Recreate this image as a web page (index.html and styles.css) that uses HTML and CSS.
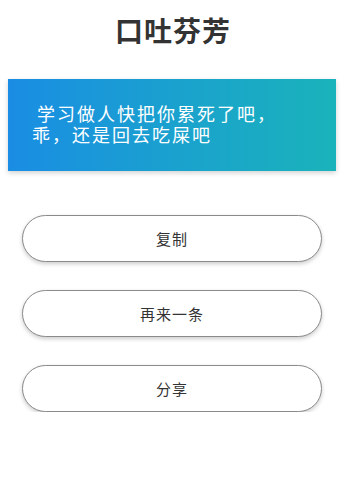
FILE: index.html
```html
<!DOCTYPE html>
<html lang="zh">
<head>
<meta charset="utf-8">
<link rel="stylesheet" href="styles.css">
</head>
<body>
<div class="page">
  <h1 class="title">口吐芬芳</h1>
  <div class="card">
    <p class="quote">学习做人快把你累死了吧，<br>乖，还是回去吃屎吧</p>
  </div>
  <div class="actions">
    <button class="btn">复制</button>
    <button class="btn">再来一条</button>
    <button class="btn">分享</button>
  </div>
</div>
</body>
</html>
```
FILE: styles.css
```css
html, body {
  margin: 0;
  padding: 0;
  background: #ffffff;
}
.page {
  font-family: "Noto Sans CJK SC", "Noto Sans", sans-serif;
  padding-top: 10px;
}
.title {
  margin: 0;
  text-align: center;
  font-size: 28px;
  line-height: 40px;
  letter-spacing: 1px;
  font-weight: 700;
  color: #333333;
}
.card {
  margin: 29px 10px 0 8px;
  height: 92px;
  box-sizing: border-box;
  padding: 26px 0 0 24px;
  background: linear-gradient(90deg, #1a8de4 0%, #1aa3cc 55%, #1ab3bb 100%);
  box-shadow: 0 2px 5px rgba(0, 0, 0, 0.18);
}
.quote {
  margin: 0;
  font-family: "Liberation Sans", "Noto Sans CJK SC", sans-serif;
  font-size: 18px;
  line-height: 21px;
  letter-spacing: 2px;
  text-indent: 5px;
  color: #ffffff;
}
.actions {
  display: flex;
  flex-direction: column;
  align-items: flex-start;
  gap: 28px;
  margin-top: 44px;
  padding-left: 22px;
}
.btn {
  width: 300px;
  height: 47px;
  border: 1px solid #8a8a8a;
  border-radius: 24px;
  background: #ffffff;
  box-shadow: 0 2px 4px rgba(0, 0, 0, 0.2);
  font-family: "Noto Sans CJK SC", "Noto Sans", sans-serif;
  font-size: 15px;
  letter-spacing: 1px;
  color: #333333;
  padding: 0;
}
```
